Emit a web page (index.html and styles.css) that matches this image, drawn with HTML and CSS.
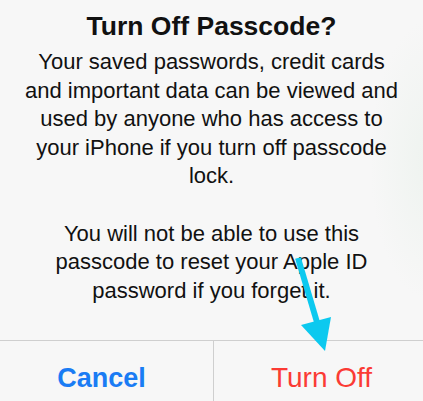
FILE: index.html
```html
<!DOCTYPE html>
<html lang="en">
<head>
  <meta charset="UTF-8">
  <meta name="viewport" content="width=device-width, initial-scale=1.0">
  <title>Turn Off Passcode?</title>
  <link rel="stylesheet" href="styles.css">
</head>
<body>

  <div class="alert">
    <p class="alert-title">Turn Off Passcode?</p>
    <p class="alert-message">
      Your saved passwords, credit cards<br>
      and important data can be viewed and<br>
      used by anyone who has access to<br>
      your iPhone if you turn off passcode<br>
      lock.<br>
      <br>
      You will not be able to use this<br>
      passcode to reset your Apple ID<br>
      password if you forget it.
    </p>

    <div class="alert-buttons">
      <button class="alert-button cancel-button">Cancel</button>
      <button class="alert-button turn-off-button">Turn Off</button>
    </div>

    <svg class="arrow" width="423" height="401" viewBox="0 0 423 401">
      <line x1="298" y1="258" x2="319" y2="329" stroke="#0cc9ef" stroke-width="6"></line>
      <polygon points="301,325 331,317 325,351" fill="#0cc9ef"></polygon>
    </svg>
  </div>

</body>
</html>
```

FILE: styles.css
```css
body {
  margin: 0;
  font-family: "Liberation Sans", Arial, sans-serif;
  background-color: #f7f7f7;
}

.alert {
  position: relative;
  width: 423px;
  height: 401px;
  overflow: hidden;
  background: radial-gradient(ellipse 60px 140px at 430px 160px, #eef3ef, #f7f7f7);
  color: #111;
  text-align: center;
}

.alert-title {
  margin: 0;
  padding-top: 10px;
  font-size: 26.5px;
  font-weight: bold;
  line-height: 32px;
}

.alert-message {
  margin: 6px 0 0;
  font-size: 22px;
  line-height: 28.6px;
}

.alert-buttons {
  display: flex;
  margin-top: 35px;
  border-top: 1px solid #cfcfcf;
}

.alert-button {
  flex: 1;
  background-color: transparent;
  border: none;
  padding: 19px 0 24px;
  font-family: inherit;
  font-size: 27px;
  line-height: 36px;
  cursor: pointer;
}

.cancel-button {
  color: #1a7cf4;
  font-weight: bold;
  border-right: 1px solid #cfcfcf;
  padding-right: 10px;
}

.turn-off-button {
  color: #fb3b34;
  font-size: 28px;
  padding-left: 6px;
}

.arrow {
  position: absolute;
  top: 0;
  left: 0;
}
```
